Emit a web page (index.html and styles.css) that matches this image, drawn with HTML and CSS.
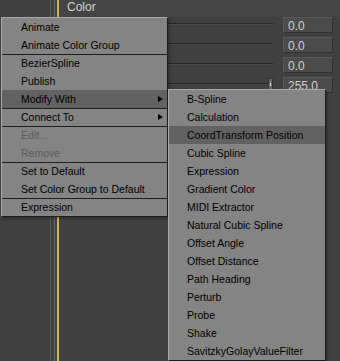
FILE: index.html
```html
<!DOCTYPE html>
<html lang="en">
<head>
<meta charset="UTF-8">
<title>Color Context Menu</title>
<link rel="stylesheet" href="styles.css">
</head>
<body>

<div class="screen">
  <div class="gutter"></div>
  <div class="rule rule-a"></div>
  <div class="rule rule-b"></div>
  <div class="rule rule-y"></div>

  <div class="panel">
    <div class="panel-head">Color</div>
    <div class="row"><div class="track"></div><div class="field">0.0</div></div>
    <div class="row"><div class="track"></div><div class="field">0.0</div></div>
    <div class="row"><div class="track"></div><div class="field">0.0</div></div>
    <div class="row"><div class="track short"></div><div class="knob"></div><div class="field">255.0</div></div>
  </div>

  <ul class="menu main-menu">
    <li>Animate</li>
    <li>Animate Color Group</li>
    <li class="sep">BezierSpline</li>
    <li>Publish</li>
    <li class="active has-sub">Modify With</li>
    <li class="sep has-sub">Connect To</li>
    <li class="sep disabled">Edit...</li>
    <li class="disabled">Remove</li>
    <li class="sep">Set to Default</li>
    <li>Set Color Group to Default</li>
    <li class="sep">Expression</li>
  </ul>

  <ul class="menu sub-menu">
    <li>B-Spline</li>
    <li>Calculation</li>
    <li class="active">CoordTransform Position</li>
    <li>Cubic Spline</li>
    <li>Expression</li>
    <li>Gradient Color</li>
    <li>MIDI Extractor</li>
    <li>Natural Cubic Spline</li>
    <li>Offset Angle</li>
    <li>Offset Distance</li>
    <li>Path Heading</li>
    <li>Perturb</li>
    <li>Probe</li>
    <li>Shake</li>
    <li>SavitzkyGolayValueFilter</li>
  </ul>
</div>

</body>
</html>
```

FILE: styles.css
```css
body {
  margin: 0;
  background: #404040;
  font-family: "Liberation Sans", Arial, sans-serif;
  font-size: 11px;
}

.screen {
  position: relative;
  width: 340px;
  height: 361px;
  display: flex;
  overflow: hidden;
  background: #404040;
}

.gutter { width: 50px; }

.rule { width: 1px; }
.rule-a { background: #5a5a5a; margin-right: 3px; }
.rule-b { background: #686868; margin-right: 2px; }
.rule-y { width: 2px; background: #d5b347; }

.panel {
  flex: 1;
  background: #404040;
}

.panel-head {
  height: 17px;
  line-height: 15px;
  padding-left: 8px;
  color: #d2d2d2;
  font-size: 12px;
  background: #444;
}

.row {
  display: flex;
  align-items: flex-start;
  height: 16px;
  margin-bottom: 4px;
  padding-right: 7px;
}

.track {
  flex: 1;
  height: 1px;
  margin-top: 6px;
  margin-right: 10px;
  background: #262626;
  border-bottom: 1px solid #4a4a4a;
}
.track.short { margin-right: 0; }

.knob {
  width: 5px;
  height: 12px;
  margin-top: 1px;
  margin-right: 10px;
  background: #6a6a6a;
  border: 1px solid #333;
  box-sizing: border-box;
  position: relative;
}
.knob::after {
  content: "";
  position: absolute;
  left: 1px;
  top: 4px;
  width: 1px;
  height: 3px;
  background: #d8d8d8;
}

.field {
  width: 50px;
  height: 16px;
  box-sizing: border-box;
  padding-left: 4px;
  line-height: 16px;
  font-size: 12px;
  color: #cfcfcf;
  background: #4b4b4b;
  border-top: 1px solid #5a5a5a;
  border-left: 1px solid #5a5a5a;
  border-right: 1px solid #333;
  border-bottom: 1px solid #333;
}

.menu {
  position: absolute;
  margin: 0;
  padding: 0;
  list-style: none;
  font-size: 10.5px;
  background: #848484;
  border-top: 1px solid #a9a9a9;
  border-left: 1px solid #a9a9a9;
  border-right: 1px solid #1c1c1c;
  border-bottom: 1px solid #1c1c1c;
  box-shadow: 2px 2px 2px rgba(0,0,0,0.25);
}

.main-menu { left: 1px; top: 17px; width: 165px; }
.sub-menu { left: 168px; top: 89px; width: 156px; }

.menu li {
  position: relative;
  height: 18px;
  line-height: 18px;
  box-sizing: border-box;
  color: #000;
  white-space: nowrap;
}

.main-menu li { padding-left: 19px; }
.sub-menu li { padding-left: 18px; }

.menu li.sep {
  border-top: 1px solid #1e1e1e;
  line-height: 17px;
}

.menu li.active { background: #626262; }
.menu li.disabled { color: #5c5c5c; }

.menu li.has-sub::after {
  content: "";
  position: absolute;
  right: 4px;
  top: 6px;
  border-left: 5px solid #000;
  border-top: 3px solid transparent;
  border-bottom: 3px solid transparent;
}
.menu li.sep.has-sub::after { top: 5px; }
```
